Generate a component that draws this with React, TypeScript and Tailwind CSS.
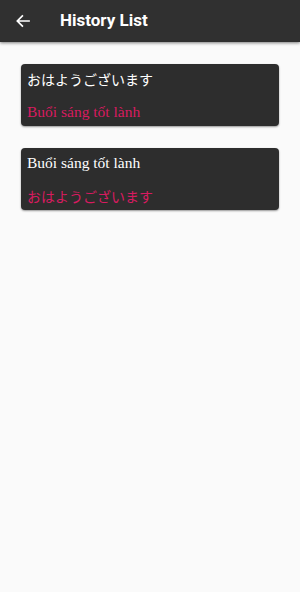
import React from "react";

function Txt({ text, className }: { text: string; className: string }) {
  const jp = /[\u3040-\u30ff]/.test(text);
  return (
    <div
      className={
        className +
        (jp
          ? " text-[14px] font-['Noto_Sans_CJK_JP',sans-serif]"
          : " text-[15.5px] font-['Liberation_Serif',serif]")
      }
    >
      {text}
    </div>
  );
}

function Card({ top, bottom }: { top: string; bottom: string }) {
  return (
    <div className="rounded-[4px] bg-[#2d2d2d] shadow-[0_1px_2px_rgba(0,0,0,0.4)] px-[6px] pt-[4px] pb-[3px]">
      <Txt text={top} className="leading-[22px] text-white" />
      <Txt text={bottom} className="mt-[11px] leading-[22px] text-[#d81b60]" />
    </div>
  );
}

export default function App() {
  return (
    <div className="w-[300px] h-[592px] bg-[#fafafa] font-['Roboto',sans-serif]">
      <div className="h-[42px] bg-[#303030] flex items-center shadow-[0_1px_3px_rgba(0,0,0,0.5)]">
        <svg className="ml-[15px]" width="16" height="16" viewBox="0 0 24 24" fill="none" stroke="white" strokeWidth="2.6" strokeLinecap="square">
          <path d="M21 12H4M11 4.5L3.5 12 11 19.5" />
        </svg>
        <div className="ml-[29px] text-white font-bold text-[17px]">History List</div>
      </div>
      <div className="px-[21px] pt-[22px] flex flex-col gap-[22px]">
        <Card top="おはようございます" bottom="Buổi sáng tốt lành" />
        <Card top="Buổi sáng tốt lành" bottom="おはようございます" />
      </div>
    </div>
  );
}
